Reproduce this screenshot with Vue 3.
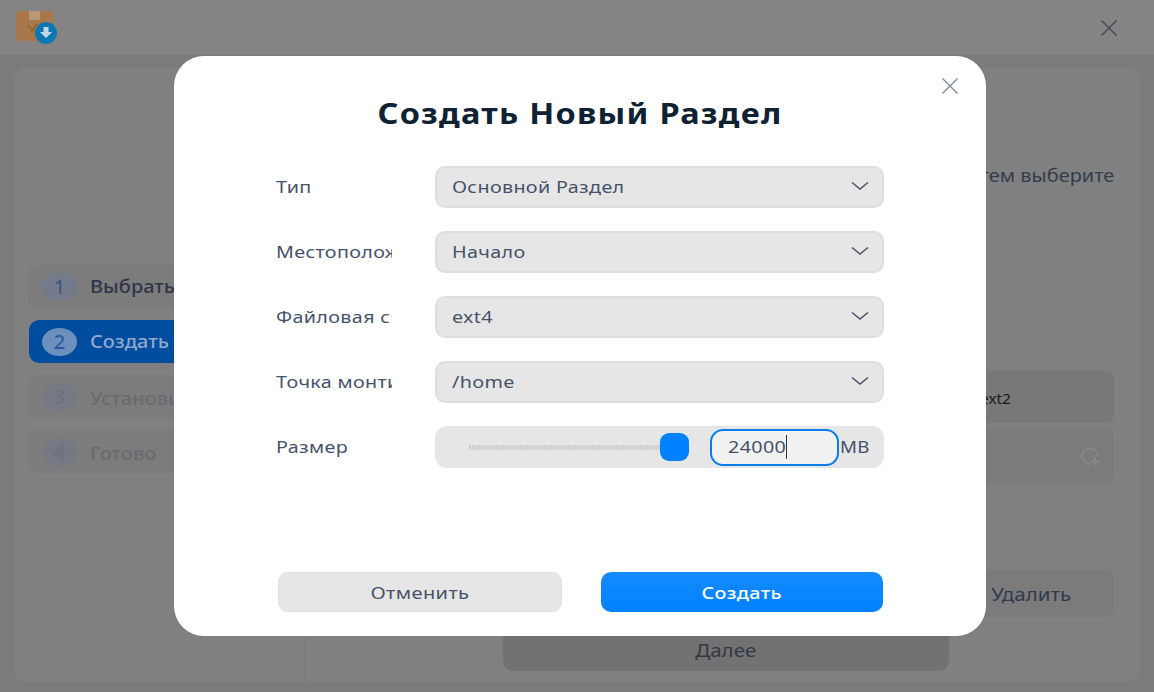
<script setup>
const steps = [
  { n: 1, label: 'Выбрать', state: 'done' },
  { n: 2, label: 'Создать', state: 'active' },
  { n: 3, label: 'Установить', state: 'off' },
  { n: 4, label: 'Готово', state: 'off' },
]
const fields = [
  { label: 'Тип', value: 'Основной Раздел' },
  { label: 'Местоположение', value: 'Начало' },
  { label: 'Файловая система', value: 'ext4' },
  { label: 'Точка монтирования', value: '/home' },
]
</script>

<template>
  <div class="win">
    <header class="titlebar">
      <svg class="logo" width="44" height="34" viewBox="0 0 44 34">
        <rect x="1" y="1" width="37" height="30" rx="4" fill="#a9784a" />
        <rect x="14" y="1" width="11" height="9" fill="#b89a76" />
        <path d="M12 15l12 10M22 14l-6 8" stroke="#8c6238" stroke-width="1.5" fill="none" />
        <circle cx="31" cy="23" r="11" fill="#0b78b4" />
        <path d="M28.500 17h5v5h3.500l-6 6-6-6h3.500z" fill="#c4d6e2" />
      </svg>
      <svg class="x" width="18" height="18" viewBox="0 0 18 18"><path d="M1.500 1.500l15 15M16.500 1.500l-15 15" /></svg>
    </header>
    <main class="card">
      <aside class="side">
        <div v-for="s in steps" :key="s.n" class="step" :class="s.state">
          <span class="num">{{ s.n }}</span>
          <span class="step-label">{{ s.label }}</span>
        </div>
      </aside>
      <section class="content">
        <p class="hint"><span>Создайте раздел, затем выберите</span></p>
        <div class="parts">
          <div class="part"><span>ext2</span></div>
          <div class="part add">
            <svg width="24" height="22" viewBox="0 0 24 22" fill="none" stroke="#8a8a8a" stroke-width="1.300">
              <path d="M12 18a8 8 0 1 1 8-8" />
              <path d="M17 11v9M12.500 15.500h9" />
            </svg>
          </div>
        </div>
        <div class="del-row"><button class="del"><span>Удалить</span></button></div>
        <div class="next-row"><button class="next"><span>Далее</span></button></div>
      </section>
    </main>

    <div class="overlay">
      <div class="modal">
        <svg class="close" width="18" height="18" viewBox="0 0 18 18"><path d="M1.500 1.500l15 15M16.500 1.500l-15 15" /></svg>
        <h1>Создать Новый Раздел</h1>
        <div class="form">
          <div v-for="f in fields" :key="f.label" class="row">
            <label class="lab"><span>{{ f.label }}</span></label>
            <div class="select">
              <span class="val">{{ f.value }}</span>
              <svg width="18" height="10" viewBox="0 0 18 10"><path d="M1 1.500l8 6.500 8-6.500" /></svg>
            </div>
          </div>
          <div class="row">
            <label class="lab"><span>Размер</span></label>
            <div class="size">
              <div class="track"></div>
              <div class="thumb"></div>
              <div class="input"><span class="val">24000</span><i class="caret"></i></div>
              <span class="unit">MB</span>
            </div>
          </div>
        </div>
        <div class="actions">
          <button class="btn cancel"><span>Отменить</span></button>
          <button class="btn ok"><span>Создать</span></button>
        </div>
      </div>
    </div>
  </div>
</template>

<style>
html, body { margin: 0; }
</style>

<style scoped>
.win {
  position: relative;
  width: 1154px;
  height: 692px;
  overflow: hidden;
  background: #7b7b7b;
  font-family: "Noto Sans", "Open Sans", sans-serif;
  display: flex;
  flex-direction: column;
}
.titlebar {
  height: 56px;
  flex: none;
  box-sizing: border-box;
  display: flex;
  align-items: center;
  justify-content: space-between;
  padding: 0 36px 0 15px;
  background: #848484;
  border-bottom: 1px solid #7a7a7a;
}
.logo { margin-top: -1px; }
.x path { stroke: #3c4352; stroke-width: 1.200; fill: none; }
.card {
  flex: 1;
  margin: 12px 14px 10px;
  background: #808080;
  border-radius: 12px;
  display: flex;
  min-height: 0;
}
.side {
  width: 291px;
  flex: none;
  box-sizing: border-box;
  border-right: 1px solid #797979;
  padding: 197px 0 0 14px;
  display: flex;
  flex-direction: column;
  gap: 12px;
}
.step {
  height: 43px;
  width: 262px;
  box-sizing: border-box;
  border-radius: 10px;
  background: #7c7c7c;
  display: flex;
  align-items: center;
  padding-left: 14px;
  gap: 13px;
  font-size: 18px;
  font-weight: 500;
  color: #2e3548;
}
.step-label {
  display: inline-block;
  transform: scaleX(1.110);
  transform-origin: left;
  position: relative;
  top: -1px;
}
.step.active { background: #004c9e; color: #8fa9cc; margin-left: 1px; width: 261px; }
.step.off { color: #686b71; }
.step.off .step-label { top: 1px; }
.step.done .num { background: #727a8b; color: #46587a; }
.num {
  width: 35px;
  height: 28px;
  border-radius: 50%;
  background: #747984;
  display: flex;
  align-items: center;
  justify-content: center;
  font-size: 20px;
  color: #6c717c;
}
.step.active .num { background: #6d8fbe; color: #2a5b9e; margin-left: -1px; }
.content {
  flex: 1;
  position: relative;
  display: flex;
  flex-direction: column;
  padding-right: 26px;
  min-width: 0;
}
.hint {
  margin: 95px 0 0;
  text-align: right;
  font-size: 17.500px;
  color: #333c4c;
  white-space: nowrap;
}
.hint span {
  display: inline-block;
  transform: scaleX(1.140);
  transform-origin: right;
}
.parts {
  margin-top: 184px;
  margin-left: 26px;
  display: flex;
  flex-direction: column;
  gap: 6px;
}
.part {
  height: 52px;
  border-radius: 8px;
  background: #787878;
  display: flex;
  align-items: center;
  font-size: 14px;
  color: #1a1a1a;
  padding-left: 649px;
}
.part span {
  display: inline-block;
  transform: scaleX(1.100);
  transform-origin: left;
  position: relative;
  top: 1px;
}
.part.add {
  background: #7b7b7b;
  justify-content: flex-end;
  padding: 2px 12px 0 0;
}
.del-row {
  margin-top: 87px;
  display: flex;
  justify-content: flex-end;
}
.del {
  width: 300px;
  height: 47px;
  border: 0;
  border-radius: 8px;
  background: #7b7b7b;
  font: inherit;
  font-size: 18px;
  color: #333a4b;
  text-align: right;
  padding: 0 43px 0 0;
}
.del span {
  display: inline-block;
  transform: scaleX(1.140);
  transform-origin: right;
}
.next-row {
  margin-top: 8px;
  padding-left: 198px;
}
.next {
  width: 446px;
  height: 46px;
  border: 0;
  border-radius: 10px;
  background: #727272;
  font: inherit;
  font-size: 18px;
  color: #333844;
  padding: 3px 0 0;
}
.next span { display: inline-block; transform: scaleX(1.140); }
.overlay {
  position: absolute;
  inset: 0;
  padding: 56px 0 0 174px;
}
.modal {
  position: relative;
  width: 812px;
  height: 580px;
  box-sizing: border-box;
  background: #fff;
  border-radius: 30px;
  padding: 37px 0 0;
}
.close { position: absolute; top: 21px; right: 27px; }
.close path { stroke: #7a869e; stroke-width: 1.300; fill: none; }
h1 {
  margin: 0;
  text-align: center;
  font-size: 28px;
  line-height: 40px;
  font-weight: 700;
  letter-spacing: 1.100px;
  color: #0f2233;
  transform: scaleX(1.160);
}
.form {
  margin: 33px 102px 0 101.500px;
  display: flex;
  flex-direction: column;
  gap: 23px;
}
.row {
  display: flex;
  align-items: center;
  height: 42px;
}
.lab {
  width: 116px;
  flex: none;
  margin-right: 43.500px;
  overflow: hidden;
  white-space: nowrap;
  font-size: 17px;
  letter-spacing: .3px;
  color: #46526a;
}
.lab span {
  display: inline-block;
  transform: scaleX(1.160);
  transform-origin: left;
  position: relative;
  top: -1px;
}
.val {
  display: inline-block;
  transform: scaleX(1.160);
  transform-origin: left;
  position: relative;
  top: -1px;
}
.select {
  flex: 1;
  height: 42px;
  box-sizing: border-box;
  border: 2px solid #dedede;
  border-radius: 10px;
  background: #e6e6e6;
  display: flex;
  align-items: center;
  justify-content: space-between;
  padding: 0 13px 0 15px;
  font-size: 17px;
  letter-spacing: .3px;
  color: #46526a;
}
.select svg { margin-top: -2px; }
.select path { stroke: #46526a; stroke-width: 1.500; fill: none; }
.size {
  flex: 1;
  height: 42px;
  position: relative;
  border-radius: 12px;
  background: #e6e6e6;
  display: flex;
  align-items: center;
  padding: 0 14px 0 34px;
  font-size: 17px;
  color: #46526a;
}
.track {
  width: 192px;
  height: 5px;
  background: repeating-linear-gradient(90deg, #cfcfcf 0 2px, #e0e0e0 2px 3px);
}
.thumb {
  width: 29px;
  height: 28px;
  border-radius: 9px;
  background: #0081ff;
  margin-left: -1px;
}
.input {
  box-sizing: border-box;
  width: 129px;
  height: 37px;
  margin-left: 21px;
  border: 2px solid #0a7ee6;
  border-radius: 13px;
  background: #f1f1f1;
  display: flex;
  align-items: center;
  padding-left: 16px;
  letter-spacing: .3px;
}
.caret {
  width: 1px;
  height: 24px;
  margin-left: 8px;
  background: #333;
}
.unit {
  display: inline-block;
  margin-left: 1px;
  letter-spacing: .3px;
  transform: scaleX(1.100);
  transform-origin: left;
  position: relative;
  top: -1px;
}
.actions {
  position: absolute;
  left: 104px;
  right: 103px;
  bottom: 24px;
  display: flex;
  gap: 39px;
}
.btn {
  flex: 1;
  height: 40px;
  box-sizing: border-box;
  border-radius: 10px;
  font: inherit;
  font-size: 17px;
  letter-spacing: .3px;
}
.btn span { display: inline-block; transform: scaleX(1.180); }
.cancel { background: #e6e6e6; border: 1px solid #dedede; color: #46526a; }
.ok { background: linear-gradient(#168bff, #0081ff); border: 0; color: #fff; font-weight: 500; }
.ok span { transform: scaleX(1.160); }
</style>
